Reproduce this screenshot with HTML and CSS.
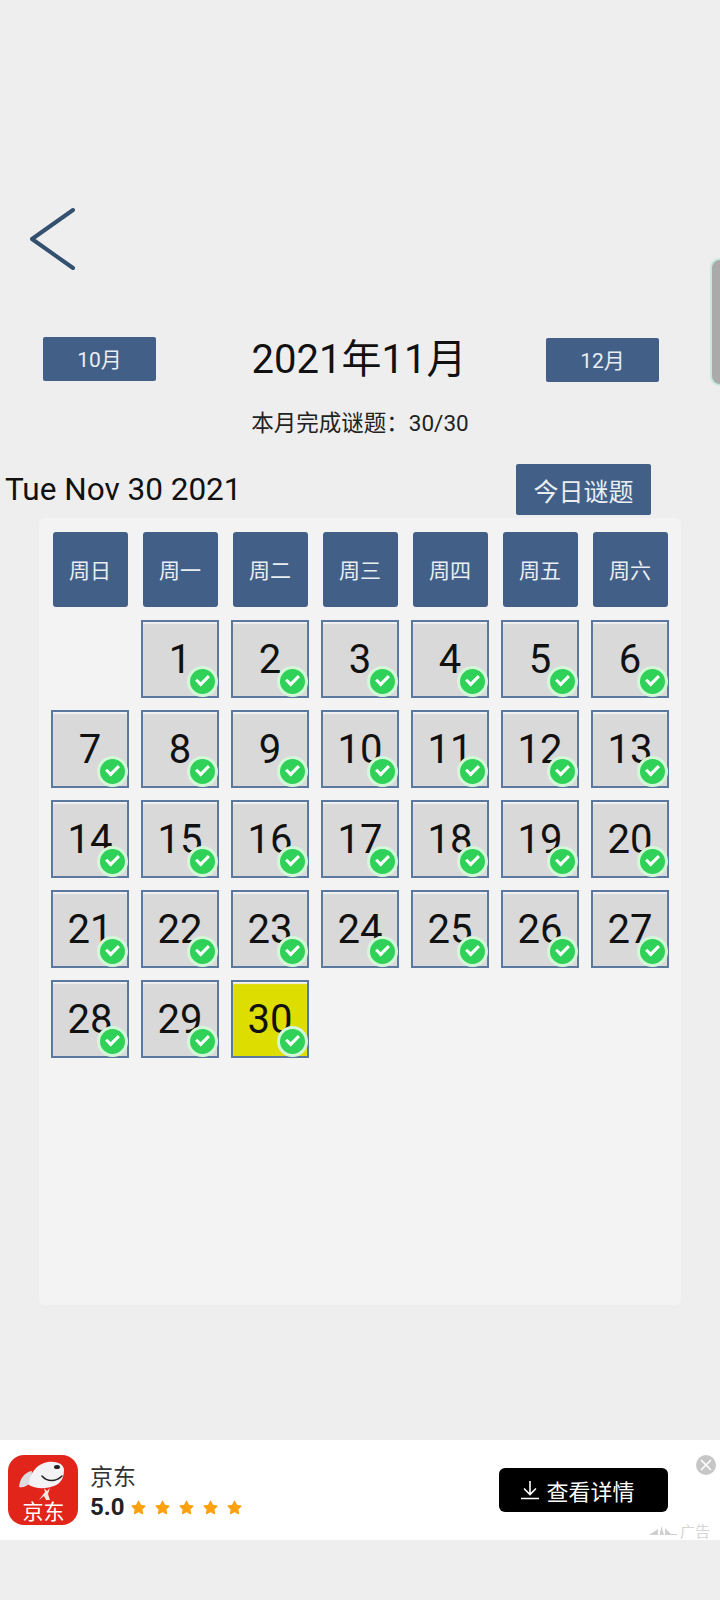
FILE: index.html
```html
<!DOCTYPE html>
<html lang="zh-CN">
<head>
    <meta charset="UTF-8">
    <meta name="viewport" content="width=device-width, initial-scale=1.0">
    <title>2021年11月</title>
    <link rel="stylesheet" href="styles.css">
</head>
<body>
    <div class="side-handle"></div>

    <svg class="back" viewBox="0 0 50 66" width="50" height="66">
        <path d="M45 4 L4 33 L45 62" />
    </svg>

    <div class="month-row">
        <button class="btn month-btn">10月</button>
        <h1 class="month-title">2021年11月</h1>
        <button class="btn month-btn next">12月</button>
    </div>
    <p class="month-count">本月完成谜题：30/30</p>

    <div class="today-row">
        <span class="today-date">Tue Nov 30 2021</span>
        <button class="btn today-btn">今日谜题</button>
    </div>

    <div class="panel">
        <div class="calendar">
            <div class="week">周日</div>
            <div class="week">周一</div>
            <div class="week">周二</div>
            <div class="week">周三</div>
            <div class="week">周四</div>
            <div class="week">周五</div>
            <div class="week">周六</div>

            <div class="day first">1<i class="tick"></i></div>
            <div class="day">2<i class="tick"></i></div>
            <div class="day">3<i class="tick"></i></div>
            <div class="day">4<i class="tick"></i></div>
            <div class="day">5<i class="tick"></i></div>
            <div class="day">6<i class="tick"></i></div>
            <div class="day">7<i class="tick"></i></div>
            <div class="day">8<i class="tick"></i></div>
            <div class="day">9<i class="tick"></i></div>
            <div class="day">10<i class="tick"></i></div>
            <div class="day">11<i class="tick"></i></div>
            <div class="day">12<i class="tick"></i></div>
            <div class="day">13<i class="tick"></i></div>
            <div class="day">14<i class="tick"></i></div>
            <div class="day">15<i class="tick"></i></div>
            <div class="day">16<i class="tick"></i></div>
            <div class="day">17<i class="tick"></i></div>
            <div class="day">18<i class="tick"></i></div>
            <div class="day">19<i class="tick"></i></div>
            <div class="day">20<i class="tick"></i></div>
            <div class="day">21<i class="tick"></i></div>
            <div class="day">22<i class="tick"></i></div>
            <div class="day">23<i class="tick"></i></div>
            <div class="day">24<i class="tick"></i></div>
            <div class="day">25<i class="tick"></i></div>
            <div class="day">26<i class="tick"></i></div>
            <div class="day">27<i class="tick"></i></div>
            <div class="day">28<i class="tick"></i></div>
            <div class="day">29<i class="tick"></i></div>
            <div class="day current">30<i class="tick"></i></div>
        </div>
    </div>

    <!-- banner ad -->
    <div class="ad">
        <svg class="ad-logo" viewBox="0 0 70 70" width="70" height="70">
            <rect width="70" height="70" rx="16" fill="#e1251b" />
            <path d="M24 16 C17 17 12 23 11 32 C15 33 20 31 23 27 Z" fill="#dcdce0" />
            <path d="M56 15 C56 7 44 5 36 8 C27 11 21 20 21 30 C28 35 46 34 52 27 C55 24 56 19 56 15 Z" fill="#f3f3f5" />
            <ellipse cx="49" cy="12" rx="3" ry="2" fill="#222" />
            <path d="M34 21 C39 27 48 27 54 21" fill="none" stroke="#222" stroke-width="1.5" stroke-linecap="round" />
            <path d="M36 33 L37 37 L31 45 L36 41 L38 45 L42 45 L40 39 L42 33 L39 36 Z" fill="#fbe3e0" />
            <text class="ad-logo-text" x="35.5" y="64">京东</text>
        </svg>
        <div class="ad-info">
            <div class="ad-name">京东</div>
            <div class="ad-rating">
                <b>5.0</b>
                <div class="stars">
                    <svg viewBox="0 0 24 24" width="15" height="15"><path d="M12 2 L15.2 8.6 L22.4 9.6 L17.2 14.7 L18.4 21.8 L12 18.4 L5.6 21.8 L6.8 14.7 L1.6 9.6 L8.8 8.6 Z" /></svg>
                    <svg viewBox="0 0 24 24" width="15" height="15"><path d="M12 2 L15.2 8.6 L22.4 9.6 L17.2 14.7 L18.4 21.8 L12 18.4 L5.6 21.8 L6.8 14.7 L1.6 9.6 L8.8 8.6 Z" /></svg>
                    <svg viewBox="0 0 24 24" width="15" height="15"><path d="M12 2 L15.2 8.6 L22.4 9.6 L17.2 14.7 L18.4 21.8 L12 18.4 L5.6 21.8 L6.8 14.7 L1.6 9.6 L8.8 8.6 Z" /></svg>
                    <svg viewBox="0 0 24 24" width="15" height="15"><path d="M12 2 L15.2 8.6 L22.4 9.6 L17.2 14.7 L18.4 21.8 L12 18.4 L5.6 21.8 L6.8 14.7 L1.6 9.6 L8.8 8.6 Z" /></svg>
                    <svg viewBox="0 0 24 24" width="15" height="15"><path d="M12 2 L15.2 8.6 L22.4 9.6 L17.2 14.7 L18.4 21.8 L12 18.4 L5.6 21.8 L6.8 14.7 L1.6 9.6 L8.8 8.6 Z" /></svg>
                </div>
            </div>
        </div>
        <button class="ad-btn">
            <svg viewBox="0 0 20 20" width="20" height="20"><path d="M10 1 V14 M4 8.5 L10 14.5 L16 8.5 M1 18.5 H19" /></svg>
            查看详情
        </button>
        <svg class="ad-close" viewBox="0 0 20 20" width="20" height="20">
            <circle cx="10" cy="10" r="10" fill="#c6c6c6" />
            <path d="M5 5 L15 15 M15 5 L5 15" stroke="#fff" stroke-width="1.6" />
        </svg>
        <div class="ad-mark">
            <svg viewBox="0 0 28 10" width="28" height="10"><path d="M0 9 L9 3 L9 9 Z M10.5 9 L12.5 0 L15 9 Z M16 9 L16 2 L22 8 L28 8 L28 9 Z" /></svg>
            广告
        </div>
    </div>
</body>
</html>
```

FILE: styles.css
```css
body {
    margin: 0;
    height: 1600px;
    overflow: hidden;
    position: relative;
    background-color: #eeeeee;
    color: #111;
    font-family: Roboto, "Noto Sans CJK SC", sans-serif;
}

.side-handle {
    position: absolute;
    top: 258px;
    right: 0;
    width: 8px;
    height: 124px;
    background-color: #aaaaaa;
    border: 2px solid #c4e8dc;
    border-right: none;
    border-radius: 10px 0 0 10px;
}

.back {
    display: block;
    margin: 206px 0 0 28px;
}

.back path {
    fill: none;
    stroke: #34506f;
    stroke-width: 4;
    stroke-linecap: round;
    stroke-linejoin: round;
}

.btn {
    padding: 0;
    border: none;
    border-radius: 2px;
    background-color: #426087;
    color: #e9eef3;
    font-family: inherit;
}

.month-row {
    display: flex;
    justify-content: space-between;
    align-items: flex-start;
    margin-top: 65px;
    padding: 0 61px 0 43px;
}

.month-btn {
    width: 113px;
    height: 44px;
    padding-bottom: 3px;
    font-size: 21px;
}

.month-btn.next {
    margin-top: 1px;
}

.month-title {
    margin: 0 0 0 16px;
    font-size: 40px;
    font-weight: 400;
    line-height: 45px;
}

.month-count {
    margin: 26px 0 0 0;
    color: #222;
    font-size: 22.5px;
    line-height: 30px;
    text-align: center;
}

.today-row {
    display: flex;
    justify-content: space-between;
    align-items: center;
    margin-top: 26px;
    padding: 0 69px 0 5px;
}

.today-date {
    font-size: 31.5px;
}

.today-btn {
    width: 135px;
    height: 51px;
    font-size: 25px;
}

.panel {
    height: 773px;
    margin: 3px 39px 0;
    padding: 14px 0 0 12px;
    border-radius: 6px;
    background-color: #f3f3f3;
}

.calendar {
    display: grid;
    grid-template-columns: repeat(7, 78px);
    grid-template-rows: 76px;
    grid-auto-rows: 78px;
    gap: 12px;
}

.week {
    display: flex;
    justify-content: center;
    align-items: center;
    box-sizing: border-box;
    width: 75px;
    height: 75px;
    margin-left: 1.5px;
    padding-bottom: 2px;
    border-radius: 3px;
    background-color: #426087;
    color: #e9eef3;
    font-size: 21px;
}

.day {
    position: relative;
    display: flex;
    justify-content: center;
    align-items: center;
    box-sizing: border-box;
    border: 2px solid #5b789f;
    background-color: #d9d9d9;
    box-shadow: inset 0 2px 1px #f1f1f1;
    font-size: 40px;
}

.day.first {
    grid-column-start: 2;
}

.day.current {
    background-color: #dedd00;
}

.tick {
    position: absolute;
    right: -1px;
    bottom: -1px;
    box-sizing: border-box;
    width: 31px;
    height: 31px;
    border: 3px solid #d4f7da;
    border-radius: 50%;
    background-color: #2fd158;
}

.tick::after {
    content: "";
    position: absolute;
    top: 6px;
    left: 6px;
    width: 10px;
    height: 5px;
    border-left: 3px solid #fff;
    border-bottom: 3px solid #fff;
    transform: rotate(-45deg);
}

.ad {
    position: relative;
    display: flex;
    align-items: center;
    height: 100px;
    margin-top: 135px;
    padding-left: 8px;
    background-color: #fff;
}

.ad-logo-text {
    fill: #fff;
    font-size: 21px;
    text-anchor: middle;
}

.ad-info {
    margin: 5px 0 0 12px;
}

.ad-name {
    color: #333;
    font-size: 23px;
    line-height: 30px;
}

.ad-rating {
    display: flex;
    align-items: center;
    gap: 6px;
    line-height: 29px;
}

.ad-rating b {
    color: #222;
    font-size: 24px;
}

.stars {
    display: flex;
    gap: 9px;
}

.stars svg {
    fill: #ffa00d;
    stroke: #ffa00d;
    stroke-width: 2;
    stroke-linejoin: round;
}

.ad-btn {
    display: flex;
    justify-content: center;
    align-items: center;
    gap: 6px;
    width: 169px;
    height: 44px;
    margin-left: auto;
    margin-right: 52px;
    padding: 0 12px 0 0;
    border: none;
    border-radius: 6px;
    background-color: #000;
    color: #fff;
    font-family: inherit;
    font-size: 22px;
}

.ad-btn svg {
    fill: none;
    stroke: #fff;
    stroke-width: 1.6;
}

.ad-close {
    position: absolute;
    top: 15px;
    right: 4px;
}

.ad-mark {
    position: absolute;
    right: 10px;
    bottom: -1px;
    display: flex;
    align-items: center;
    gap: 3px;
    color: #d5d5d5;
    font-size: 15px;
}

.ad-mark svg {
    fill: #d0d0d0;
}
```
